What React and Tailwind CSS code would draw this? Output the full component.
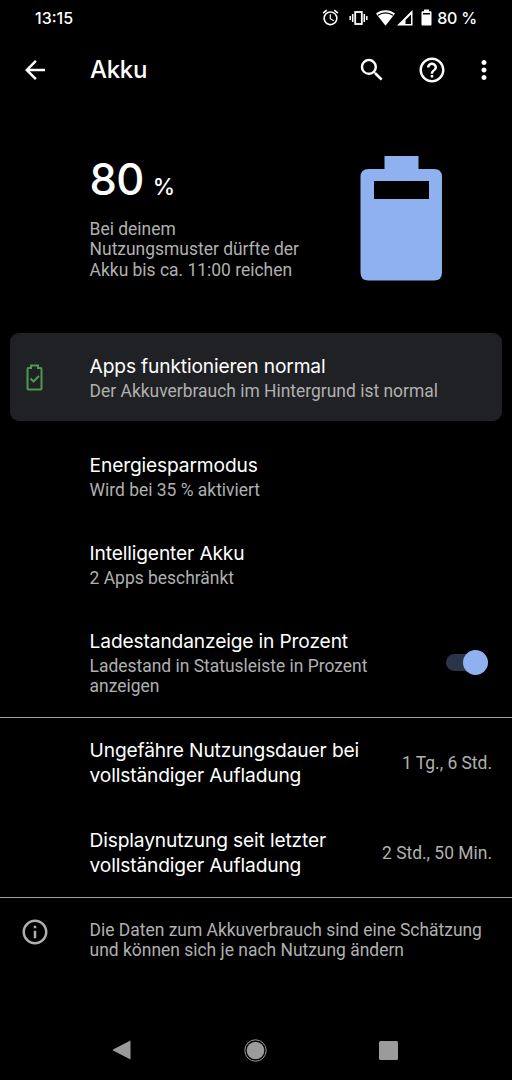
import { useState } from "react";
import {
  MdAlarm,
  MdArrowBack,
  MdHelpOutline,
  MdInfoOutline,
  MdMoreVert,
  MdSearch,
} from "react-icons/md";

function StatusBar() {
  return (
    <div className="h-[35px] pl-[35px] pr-[35px] flex items-center justify-between font-['Inter',sans-serif] font-medium text-white">
      <span className="pt-px text-[16px]">13:15</span>
      <div className="flex items-center">
        <MdAlarm className="size-[19px] mr-[9px]" />

        {/* vibrate */}
        <svg width="19" height="14" viewBox="0 0 19 14" fill="none" stroke="currentColor" className="mr-[8px]">
          <rect x="6.2" y="1" width="6.6" height="12" strokeWidth="1.8" />
          <path d="M3.7 3v8M15.3 3v8" strokeWidth="1.6" />
          <path d="M1.2 5v4M17.8 5v4" strokeWidth="1.5" />
        </svg>

        {/* wifi */}
        <svg width="19" height="16" viewBox="0 0 19 16" className="mr-[2px]">
          <path fill="currentColor" d="M9.5 0.3C5.9 0.3 2.6 1.5 0 3.6L9.5 15.7L19 3.6C16.4 1.5 13.1 0.3 9.5 0.3z" />
          <path fill="none" stroke="#000" strokeWidth="1.3" d="M2 5.3C4.3 3.6 6.8 2.8 9.5 2.8s5.2 0.8 7.5 2.5" />
        </svg>

        {/* mobile signal */}
        <svg width="16" height="16" viewBox="0 0 16 16" className="mr-[8px]">
          <path fill="currentColor" d="M15.5 0v15.5H0zM14 4.5L8.5 10V14H14z" fillRule="evenodd" />
        </svg>

        {/* battery */}
        <svg width="11" height="17" viewBox="0 0 11 17" className="mr-[5px]">
          <path fill="currentColor" fillRule="evenodd" d="M3 0.500h5v1.700h1.600q0.900 0 0.900 0.900v12.400q0 0.900-0.900 0.900H1.400q-0.900 0-0.900-0.900V3.100q0-0.900 0.900-0.900H3zM2 4v1.500h7V4z" />
        </svg>
        <span className="pt-px text-[16px] tracking-[-0.2px]">80 %</span>
      </div>
    </div>
  );
}

function Toolbar() {
  return (
    <div className="h-[69px] pl-5 pr-[13px] flex items-center text-white">
      <MdArrowBack className="size-[30px]" />
      <h1 className="ml-[40px] flex-1 font-['Inter',sans-serif] font-medium text-[24px] tracking-[-0.3px]">
        Akku
      </h1>
      <MdSearch className="size-[30px]" />
      <MdHelpOutline className="size-[30px] ml-[30px]" />
      <MdMoreVert className="size-[30px] ml-[22px]" />
    </div>
  );
}

function Overview() {
  return (
    <div className="h-[229px] pt-[52px] pl-[89.6px] pr-[69px] flex justify-between">
      <div>
        <div className="h-[63px] font-['Inter',sans-serif] font-medium text-white leading-[46px]">
          <span className="text-[43.5px] tracking-[-0.7px]">80</span>
          <span className="text-[22.5px] ml-[9px]">%</span>
        </div>
        <p className="text-[17.46px] leading-[20.4px] text-[#b0b0b0]">
          Bei deinem
          <br />
          Nutzungsmuster dürfte der
          <br />
          Akku bis ca. 11:00 reichen
        </p>
      </div>
      <svg width="83" height="125" viewBox="0 0 83 125" className="text-[#90b1f0]">
        <path
          fill="currentColor"
          fillRule="evenodd"
          d="M24.5 0h34v13H74q8 0 8 8v95.5q0 8-8 8H8.5q-8 0-8-8V21q0-8 8-8h16zM14 25v18h55V25z"
        />
      </svg>
    </div>
  );
}

function BatteryOk() {
  return (
    <svg width="17" height="27" viewBox="0 0 17 27" fill="none" stroke="#4a9a55" strokeWidth="2">
      <path d="M5 1.5h7v2.5h2.500q1 0 1 1V24.500q0 1-1 1H2.500q-1 0-1-1V5q0-1 1-1H5z" />
      <path d="M4.5 14.5l3 3 5.5-5.5" />
    </svg>
  );
}

function Preference({ title, summary }) {
  return (
    <div className="flex-1">
      <div className="font-['Inter',sans-serif] text-[19.2px] leading-[25px] tracking-[-0.15px] text-white">
        {title}
      </div>
      <div className="pt-[2.2px] text-[17.46px] leading-[20.4px] text-[#b0b0b0]">
        {summary}
      </div>
    </div>
  );
}

function UsageRow({ lines, value }) {
  return (
    <div className="h-[90px] pt-[20px] pl-[89.6px] pr-[20px] flex justify-between">
      <div className="font-['Inter',sans-serif] text-[19.2px] leading-[25px] tracking-[-0.15px] text-white whitespace-nowrap">
        {lines[0]}
        <br />
        {lines[1]}
      </div>
      <span className="pt-[15px] text-[17.46px] leading-[20.4px] text-[#b0b0b0] whitespace-nowrap">
        {value}
      </span>
    </div>
  );
}

export default function App() {
  const [showPercent, setShowPercent] = useState(true);

  return (
    <div className="w-[512px] h-[1080px] bg-black flex flex-col overflow-hidden font-['Roboto',sans-serif]">
      <StatusBar />
      <Toolbar />
      <Overview />

      <div className="mx-[10px] mb-[11px] h-[88px] pt-[20.5px] rounded-[9px] bg-[#202124] flex">
        <div className="w-[79.6px] pl-[16px] pt-[10px]">
          <BatteryOk />
        </div>
        <Preference
          title="Apps funktionieren normal"
          summary="Der Akkuverbrauch im Hintergrund ist normal"
        />
      </div>

      <div className="h-[88.4px] pl-[89.6px] pt-[20.6px]">
        <Preference title="Energiesparmodus" summary="Wird bei 35 % aktiviert" />
      </div>
      <div className="h-[88.4px] pl-[89.6px] pt-[20.6px]">
        <Preference title="Intelligenter Akku" summary="2 Apps beschränkt" />
      </div>

      <div className="h-[108.2px] pl-[89.6px] pr-[24px] pt-[20px] flex">
        <Preference
          title="Ladestandanzeige in Prozent"
          summary={
            <>
              Ladestand in Statusleiste in Prozent
              <br />
              anzeigen
            </>
          }
        />
        <button
          role="switch"
          aria-checked={showPercent}
          aria-label="Ladestandanzeige in Prozent"
          onClick={() => setShowPercent(!showPercent)}
          className={`mt-[25px] w-[42px] h-[17px] rounded-full flex items-center ${
            showPercent ? "bg-[#2b3548] justify-end" : "bg-[#444] justify-start"
          }`}
        >
          <span className="size-[25px] rounded-full bg-[#90b1f0]" />
        </button>
      </div>

      <div className="h-px shrink-0 bg-[#a0a0a0]" />
      <UsageRow
        lines={["Ungefähre Nutzungsdauer bei", "vollständiger Aufladung"]}
        value="1 Tg., 6 Std."
      />
      <UsageRow
        lines={["Displaynutzung seit letzter", "vollständiger Aufladung"]}
        value="2 Std., 50 Min."
      />
      <div className="h-px -mt-px shrink-0 bg-[#a0a0a0]" />

      <div className="flex-1 pl-5 pt-[19px] flex items-start text-[#b0b0b0]">
        <MdInfoOutline className="size-[30px]" />
        <p className="ml-[39.6px] pt-[3px] text-[17.46px] leading-[20.4px]">
          Die Daten zum Akkuverbrauch sind eine Schätzung
          <br />
          und können sich je nach Nutzung ändern
        </p>
      </div>

      {/* NAVIGATION BAR */}
      <div className="h-[60px] shrink-0 pl-[112px] pr-[114px] flex items-center justify-between text-[#9b9b9b]">
        <svg width="19" height="20" viewBox="0 0 19 20">
          <path fill="currentColor" d="M18.5 0.5v19L1 10.5q-0.7-0.5 0-1z" />
        </svg>
        <svg width="23" height="23" viewBox="0 0 23 23">
          <circle cx="11.5" cy="11.5" r="10.7" fill="none" stroke="currentColor" />
          <circle cx="11.5" cy="11.5" r="8.8" fill="currentColor" />
        </svg>
        <div className="size-[19px] rounded-[1.5px] bg-[#9b9b9b]" />
      </div>
    </div>
  );
}
